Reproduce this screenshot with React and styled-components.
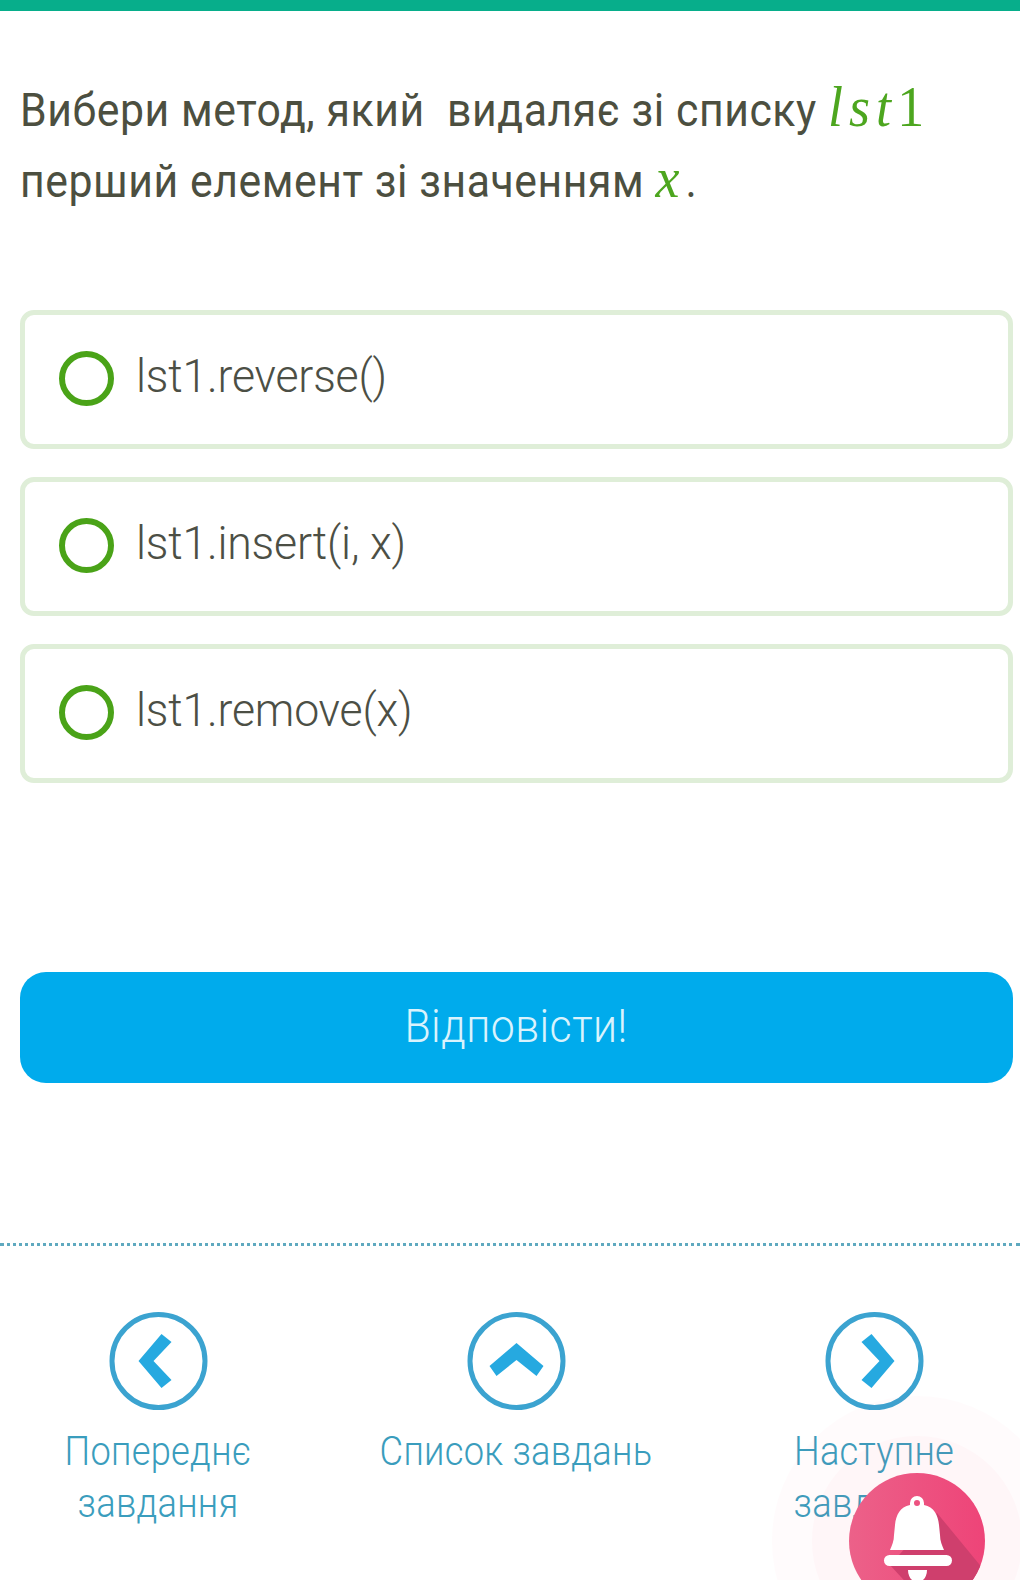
import React from 'react';
import styled, { createGlobalStyle } from 'styled-components';

const GlobalStyle = createGlobalStyle`
  html, body {
    margin: 0;
    padding: 0;
    background: #fff;
  }
  body {
    font-family: Roboto, "Noto Sans", sans-serif;
  }
`;

const Page = styled.div`
  position: relative;
  width: 1020px;
  height: 1580px;
  overflow: hidden;
  background: #fff;
`;

const TopBar = styled.div`
  height: 11px;
  background: #07ae8b;
`;

const Content = styled.main`
  padding: 64px 7px 0 20px;
`;

// the reference text is narrower than Roboto, so it gets squeezed horizontally
const Question = styled.p`
  width: 1060px;
  margin: 0;
  font-size: 46px;
  line-height: 71px;
  font-weight: 400;
  letter-spacing: 0.6px;
  color: #4c4f40;
  white-space: pre-wrap;
  transform: scaleX(0.93);
  transform-origin: left center;
`;

const MathVar = styled.span`
  font-family: "Liberation Serif", serif;
  font-style: italic;
  font-size: 58px;
  line-height: 0;
  letter-spacing: 6.5px;
  color: #4da61f;
`;

const MathDigit = styled.span`
  font-style: normal;
`;

const Options = styled.div`
  display: flex;
  flex-direction: column;
  gap: 28px;
  margin-top: 93px;
`;

const Option = styled.label`
  display: flex;
  align-items: center;
  gap: 22px;
  box-sizing: border-box;
  height: 139px;
  padding: 0 36px 2px 34px;
  border: 5px solid #dfeed8;
  border-radius: 14px;
  background: #fff;
`;

const Radio = styled.span`
  flex: none;
  box-sizing: border-box;
  width: 55px;
  height: 55px;
  border: 6px solid #4aa318;
  border-radius: 50%;
`;

const OptionText = styled.span`
  padding-bottom: 6px;
  font-size: 46px;
  font-weight: 300;
  letter-spacing: -0.2px;
  color: #4c4f45;
  transform: scaleX(0.97);
  transform-origin: left center;
`;

const AnswerButton = styled.button`
  display: block;
  width: 100%;
  height: 111px;
  margin-top: 189px;
  padding: 0 0 3px;
  border: none;
  border-radius: 26px;
  background: #00abec;
  color: #d9f3fd;
  font-family: inherit;
  font-size: 46px;
  font-weight: 300;
`;

const AnswerLabel = styled.span`
  display: inline-block;
  letter-spacing: 0.5px;
  transform: scaleX(0.93);
`;

const Divider = styled.hr`
  height: 0;
  margin: 160px 0 0;
  border: none;
  border-top: 3px dotted #5fa9bf;
`;

const Nav = styled.nav`
  display: grid;
  grid-template-columns: repeat(3, 290px);
  column-gap: 68px;
  padding: 65px 0 0 13px;
`;

const NavItem = styled.a`
  display: flex;
  flex-direction: column;
  align-items: center;
  text-align: center;
  color: #3a9dbd;
  font-size: 40px;
  font-weight: 300;
  line-height: 52px;
`;

const NavCircle = styled.svg`
  display: block;
  width: 101px;
  height: 100px;
  margin-bottom: 15px;
`;

const NavLabel = styled.span`
  display: block;
  flex: none;
  width: 320px;
  letter-spacing: 0.3px;
  transform: scaleX(0.906);
`;

const Halo = styled.div`
  position: absolute;
  left: 917px;
  top: 1541px;
  width: ${(p) => p.$size}px;
  height: ${(p) => p.$size}px;
  transform: translate(-50%, -50%);
  border-radius: 50%;
  background: ${(p) => p.$color};
`;

const BellButton = styled.svg`
  position: absolute;
  left: 849px;
  top: 1473px;
  width: 136px;
  height: 136px;
`;

function NavIcon({ points }) {
  return (
    <NavCircle viewBox="0 0 100 100" aria-hidden="true">
      <circle cx="50" cy="50" r="46.5" fill="none" stroke="#3ba3d0" strokeWidth="5" />
      <polygon points={points} fill="#26a9e0" />
    </NavCircle>
  );
}

function BellIcon() {
  return (
    <BellButton viewBox="0 0 136 136" aria-hidden="true">
      <defs>
        <linearGradient id="bellBg" x1="0" y1="0.5" x2="1" y2="0.5">
          <stop offset="0" stopColor="#ec6189" />
          <stop offset="1" stopColor="#ee4478" />
        </linearGradient>
        <clipPath id="bellClip">
          <circle cx="68" cy="68" r="68" />
        </clipPath>
      </defs>
      <circle cx="68" cy="68" r="68" fill="url(#bellBg)" />
      <polygon points="88,40 140,103 140,140 85,140 41,92" fill="#cf3f6d" clipPath="url(#bellClip)" />
      <path
        d="M68 23a7 7 0 0 1 7 7v2c10 2 14 10 15 20l1 10c0 6 2 10 4 15H41c2-5 4-9 4-15l1-10c1-10 5-18 15-20v-2a7 7 0 0 1 7-7zm0 4a3 3 0 1 0 0 6 3 3 0 0 0 0-6z"
        fill="#fff"
        fillRule="evenodd"
      />
      <rect x="35" y="82" width="68" height="11" rx="5.5" fill="#fff" />
      <path d="M59 97h19c0 7-4 12-9.500 12S59 104 59 97z" fill="#fff" />
    </BellButton>
  );
}

const options = ['lst1.reverse()', 'lst1.insert(i, x)', 'lst1.remove(x)'];

export default function App() {
  return (
    <Page>
      <GlobalStyle />
      <TopBar />
      <Content>
        <Question>
          {'Вибери метод, який  видаляє зі списку '}
          <MathVar>
            lst<MathDigit>1</MathDigit>
          </MathVar>
          {'\nперший елемент зі значенням '}
          <MathVar>x</MathVar>.
        </Question>
        <Options>
          {options.map((text) => (
            <Option key={text}>
              <Radio />
              <OptionText>{text}</OptionText>
            </Option>
          ))}
        </Options>
        <AnswerButton>
          <AnswerLabel>Відповісти!</AnswerLabel>
        </AnswerButton>
      </Content>
      <Divider />
      <Nav>
        <NavItem>
          <NavIcon points="30,50 53,23 63,31 45,50 63,69 53,77" />
          <NavLabel>Попереднє завдання</NavLabel>
        </NavItem>
        <NavItem>
          <NavIcon points="50,32 77,55 70,65 50,49 30,65 23,55" />
          <NavLabel>Список завдань</NavLabel>
        </NavItem>
        <NavItem>
          <NavIcon points="70,50 47,23 37,31 55,50 37,69 47,77" />
          <NavLabel>Наступне завдання</NavLabel>
        </NavItem>
      </Nav>
      <Halo $size={290} $color="rgba(248, 87, 130, 0.025)" />
      <Halo $size={210} $color="rgba(248, 87, 130, 0.03)" />
      <BellIcon />
    </Page>
  );
}
